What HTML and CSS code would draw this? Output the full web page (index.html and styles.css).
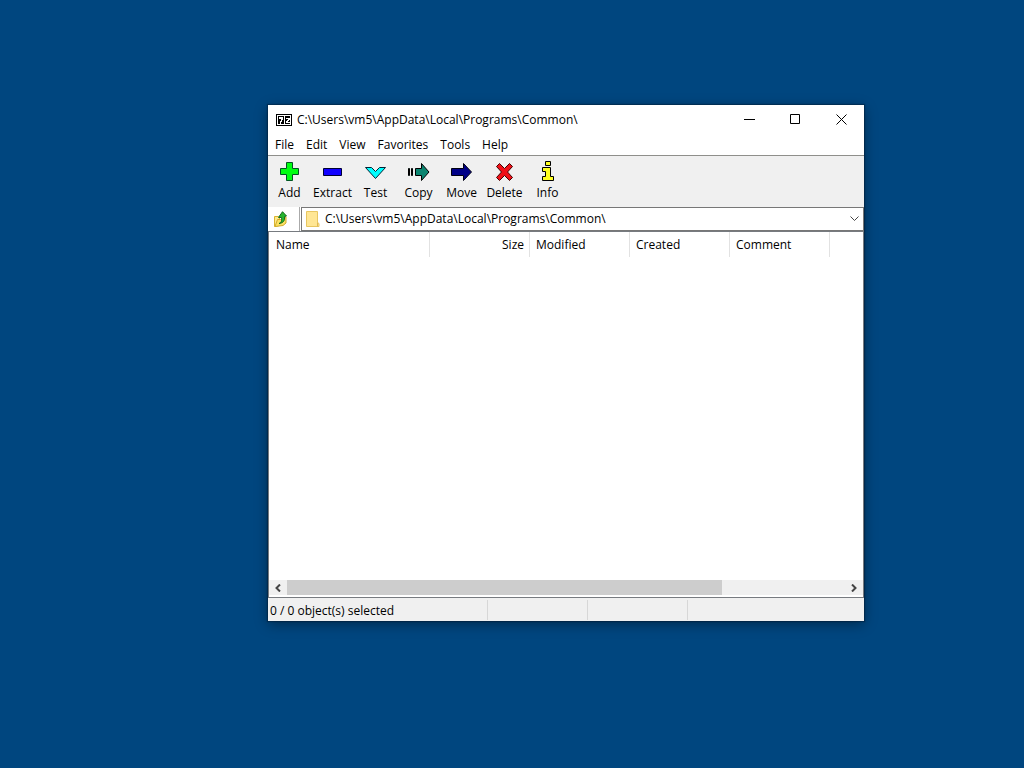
FILE: index.html
```html
<!DOCTYPE html>
<html lang="en">
<head>
<meta charset="utf-8">
<meta name="viewport" content="width=device-width, initial-scale=1">
<title>C:\Users\vm5\AppData\Local\Programs\Common\</title>
<link rel="stylesheet" href="styles.css">
</head>
<body>
<main class="desktop">
  <section class="window">
    <header class="titlebar">
      <svg class="app-icon" width="16" height="12" viewBox="0 0 16 12" shape-rendering="crispEdges" aria-hidden="true">
        <path d="M0 0h16v12H0z" fill="#000"/>
        <path d="M1 1h14v10H1z" fill="#fff"/>
        <path d="M2 2h6v8H2zM9 2h5v8H9z" fill="#000"/>
        <path d="M3 3h4v3H6v2H5v2H4V7h1V5H3zM10 4h4v2h-1v1h-1v1h2v1h-4V7h1V6h1V5h-2z" fill="#fff"/>
      </svg>
      <h1 class="title">C:\Users\vm5\AppData\Local\Programs\Common\</h1>
      <div class="caption-buttons">
        <button class="caption" type="button" aria-label="Minimize"><svg width="11" height="11" viewBox="0 0 11 11"><path d="M0 5.500h11" stroke="#000"/></svg></button>
        <button class="caption" type="button" aria-label="Maximize"><svg width="11" height="11" viewBox="0 0 11 11"><path d="M.5.5h9v9h-9z" fill="none" stroke="#000"/></svg></button>
        <button class="caption" type="button" aria-label="Close"><svg width="11" height="11" viewBox="0 0 11 11"><path d="M.5.5l10 10M10.500.5l-10 10" stroke="#000"/></svg></button>
      </div>
    </header>
    <nav class="menubar" aria-label="Menu">
      <button type="button">File</button>
      <button type="button">Edit</button>
      <button type="button">View</button>
      <button type="button">Favorites</button>
      <button type="button">Tools</button>
      <button type="button">Help</button>
    </nav>
    <div class="toolbar">
      <button class="tool" type="button">
        <svg width="24" height="24" viewBox="1 0 24 24"><path d="M9.500 2.500h6v6h6v6h-6v6h-6v-6h-6v-6h6z" fill="#0f1" stroke="#052"/></svg>
        <span>Add</span>
      </button>
      <button class="tool" type="button">
        <svg width="24" height="24" viewBox="1 0 24 24"><path d="M3.500 8.500h18v7h-18z" fill="#10f" stroke="#003"/></svg>
        <span>Extract</span>
      </button>
      <button class="tool" type="button">
        <svg width="24" height="24" viewBox="1 0 24 24"><path d="M2.500 7.500h6l4 4 4-4h6L12.500 18.500z" fill="#0ff" stroke="#023"/></svg>
        <span>Test</span>
      </button>
      <button class="tool" type="button">
        <svg width="24" height="24" viewBox="1 0 24 24"><path d="M2.500 8.500h1v7h-1zM5.500 8.500h1v7h-1zM9.500 8.500h6v-5l7.500 8.500-7.500 8.500v-5h-6z" fill="#0b8570" stroke="#000"/></svg>
        <span>Copy</span>
      </button>
      <button class="tool" type="button">
        <svg width="24" height="24" viewBox="1 0 24 24"><path d="M2.500 8.500h12v-5l8 8.500-8 8.500v-5h-12z" fill="#000087" stroke="#001"/></svg>
        <span>Move</span>
      </button>
      <button class="tool" type="button">
        <svg width="24" height="24" viewBox="1 0 24 24"><path d="M4.500 6.500l3-3 5 5 5-5 3 3-5 5.500 5 5.500-3 3-5-5-5 5-3-3 5-5.500z" fill="#f01018" stroke="#400"/></svg>
        <span>Delete</span>
      </button>
      <button class="tool" type="button">
        <svg width="24" height="24" viewBox="1 0 24 24"><path d="M10.500 1.500h5v4h-5zM7.500 7.500h8v9h3v4h-11v-4h3v-5h-3z" fill="#ff2" stroke="#000"/></svg>
        <span>Info</span>
      </button>
    </div>
    <div class="address-row">
      <button class="up" type="button" aria-label="Up one level">
        <svg width="16" height="16" viewBox="0 0 16 16"><path d="M1.500 5.500h4l1 1v8l-5 1z" fill="#ffe98c" stroke="#d9b32f"/><path d="M2 15.500l2.500-7h3L13 6v6l-3 2.500z" fill="#fbe163" stroke="#d0ab2d"/><path d="M6 12.500c3-1 2.500-3 2.500-6H5.500L9.500.7l4 4.300-2 .5c.5 4-1 6.500-5.500 7z" fill="#25b52d" stroke="#126a1b"/></svg>
      </button>
      <div class="combo">
        <svg width="14" height="16" viewBox="0 0 14 16" aria-hidden="true"><path d="M.5.500h11v11l1.500 1v3H.5z" fill="#ffe694" stroke="#e8c660"/><path d="M11.500 11.500v4" stroke="#dfb956"/></svg>
        <input class="path" type="text" aria-label="Address" value="C:\Users\vm5\AppData\Local\Programs\Common\">
        <button class="drop" type="button" aria-label="Show folders"><svg width="9" height="6" viewBox="0 0 9 6"><path d="M.5.500l4 4 4-4" fill="none" stroke="#444"/></svg></button>
      </div>
    </div>
    <div class="list">
      <div class="list-view">
        <table class="files">
          <thead>
            <tr><th class="col-name" scope="col">Name</th><th class="col-size" scope="col">Size</th><th scope="col">Modified</th><th scope="col">Created</th><th scope="col">Comment</th></tr>
          </thead>
        </table>
      </div>
      <div class="scrollbar">
        <button type="button" aria-label="Scroll left"><svg width="6" height="8" viewBox="0 0 6 8"><path d="M5 .5L1.500 4 5 7.500" fill="none" stroke="#444" stroke-width="2"/></svg></button>
        <div class="track"><div class="thumb"></div></div>
        <button type="button" aria-label="Scroll right"><svg width="6" height="8" viewBox="0 0 6 8"><path d="M1 .5L4.500 4 1 7.500" fill="none" stroke="#444" stroke-width="2"/></svg></button>
      </div>
    </div>
    <footer class="status">
      <span class="pane pane-main">0 / 0 object(s) selected</span>
      <span class="pane"></span>
      <span class="pane"></span>
    </footer>
  </section>
</main>
</body>
</html>
```
FILE: styles.css
```css
* { box-sizing: border-box; }

body {
  margin: 0;
  background: #00467f;
  color: #000;
  font: 12px/16px "Open Sans", "Noto Sans", sans-serif;
}

button, input {
  margin: 0;
  padding: 0;
  border: 0;
  background: none;
  color: inherit;
  font: inherit;
}

svg { display: block; flex: none; }

.desktop {
  display: flex;
  min-height: 100vh;
  padding: 105px 160px 147px 268px;
}

.window {
  flex: 1;
  min-width: 0;
  display: flex;
  flex-direction: column;
  background: #fff;
  box-shadow: 0 0 1px 1px rgba(0, 20, 40, .4), 0 3px 12px rgba(0, 0, 0, .4);
}

.titlebar {
  display: flex;
  align-items: center;
  height: 29px;
  padding-left: 8px;
}

.title {
  flex: 1;
  margin: 0 0 0 5px;
  font-size: 12px;
  font-weight: 400;
  white-space: nowrap;
}

.caption-buttons { display: flex; align-self: stretch; }

.caption {
  display: flex;
  align-items: center;
  justify-content: center;
  width: 46px;
}

.menubar {
  display: flex;
  gap: 12px;
  height: 22px;
  padding: 0 7px;
  border-bottom: 1px solid #8f8f8b;
}

.toolbar {
  display: flex;
  height: 51px;
  background: #f0f0f0;
}

.tool {
  display: flex;
  flex-direction: column;
  align-items: center;
  width: 43px;
  padding-top: 4px;
  white-space: nowrap;
}

.tool span { line-height: 18px; }

.address-row { display: flex; height: 24px; }

.up { width: 32px; padding-left: 5px; border-right: 1px solid #aaa; }

.combo {
  flex: 1;
  display: flex;
  align-items: center;
  margin-left: 1px;
  padding-left: 4px;
  border: 1px solid #777;
}

.path {
  flex: 1;
  min-width: 0;
  margin-left: 5px;
  outline: 0;
}

.drop { padding: 4px; }

.list {
  flex: 1;
  display: flex;
  flex-direction: column;
  border: 1px solid #777b80;
}

.list-view { flex: 1; overflow: hidden; }

.files { border-collapse: separate; border-spacing: 0; table-layout: fixed; width: 561px; }

.files th {
  width: 100px;
  height: 25px;
  padding: 0 5px 0 6px;
  border-right: 1px solid #e2e2e2;
  font-weight: 400;
  text-align: left;
}

.files .col-name { width: 161px; padding-left: 7px; }
.files .col-size { text-align: right; }

.scrollbar {
  display: flex;
  height: 17px;
  border-bottom: 2px solid #fff;
  background: #f0f0f0;
}

.scrollbar button {
  display: flex;
  align-items: center;
  justify-content: center;
  width: 18px;
}

.track { flex: 1; }
.thumb { width: 78%; height: 100%; background: #cdcdcd; }

.status {
  display: flex;
  height: 23px;
  padding-top: 2px;
  background: #f0f0f0;
}

.pane {
  width: 100px;
  height: 20px;
  border-right: 1px solid #d7d7d7;
  line-height: 22px;
}

.pane-main { width: 220px; padding-left: 2px; }
```
